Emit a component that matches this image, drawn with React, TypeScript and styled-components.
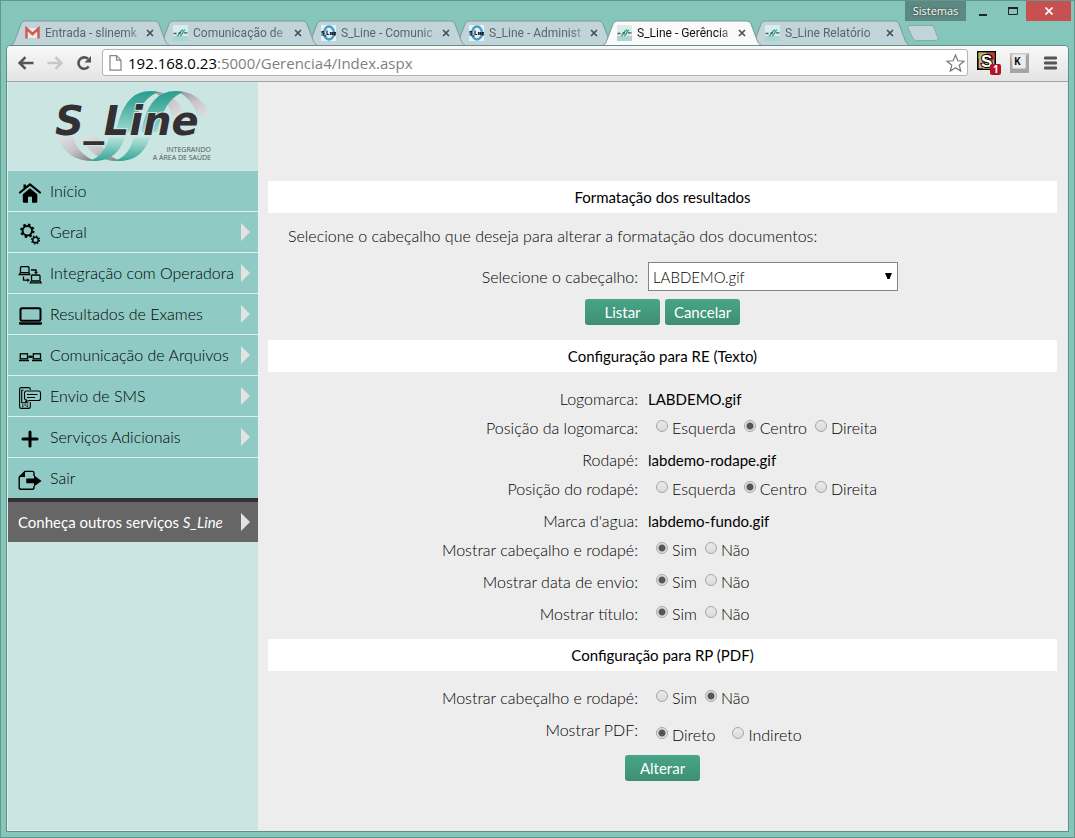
import React from "react";
import styled, { createGlobalStyle, css } from "styled-components";

const uiFont = `"Open Sans", "Noto Sans", sans-serif`;
const tabFont = `Roboto, "Open Sans", sans-serif`;
const pageFont = `Lato, "Open Sans", sans-serif`;

const GlobalStyle = createGlobalStyle`
  *, *::before, *::after { box-sizing: border-box; }
  body { margin: 0; background: #84c6ba; color: #000; font-family: ${pageFont}; font-size: 15px; }
  button, select, input { font: inherit; }
`;

const lightText = css`
  font-size: 16px;
  font-weight: 300;
`;

/* ---------- browser window ---------- */

const Window = styled.div`
  display: flex;
  flex-direction: column;
  min-height: 100vh;
  padding: 0 5px 5px;
  border: 1px solid #64968d;
  background: #84c6ba;
`;

const TitleBar = styled.header`
  position: relative;
  display: flex;
  padding: 19px 0 0 5px;
  height: 44px;
  flex: none;
  font-family: ${uiFont};
`;

const TabList = styled.div`
  display: flex;
  font-family: ${tabFont};
`;

const TabItem = styled.div<{ $active?: boolean; $order: number }>`
  position: relative;
  z-index: ${(p) => (p.$active ? 20 : 10 - p.$order)};
  display: flex;
  align-items: center;
  width: 158px;
  height: 25px;
  margin-right: -10px;
  padding: 0 11px 0 14px;
  color: ${(p) => (p.$active ? "#111" : "#59666a")};
`;

const TabShape = styled.svg`
  position: absolute;
  inset: 0;
  width: 100%;
  height: 100%;
`;

const TabButton = styled.button`
  position: relative;
  display: flex;
  align-items: center;
  gap: 5px;
  flex: 1;
  min-width: 0;
  height: 25px;
  padding: 0;
  border: 0;
  background: none;
  color: inherit;
  font-size: 12px;
  line-height: 16px;
  text-align: left;

  svg { flex: none; }
`;

const TabTitle = styled.span`
  flex: 1;
  white-space: nowrap;
  mask-image: linear-gradient(to right, #000 84%, transparent 104%);
`;

const TabClose = styled.button`
  position: relative;
  display: flex;
  width: 16px;
  height: 16px;
  padding: 4px;
  border: 0;
  background: none;
  color: inherit;
`;

const NewTab = styled.button`
  width: 32px;
  height: 16px;
  margin: 5px 0 0 8px;
  padding: 0;
  border: 0;
  background: none;
`;

const WindowControls = styled.div`
  position: absolute;
  top: 0;
  right: -2px;
  display: flex;
  height: 20px;
`;

const UserBadge = styled.button`
  width: 61px;
  padding: 0;
  border: 0;
  background: #5c8981;
  color: #fff;
  font-size: 11px;
  line-height: 20px;
  text-shadow: 0 0 2px #222;
`;

const ControlButton = styled.button<{ $close?: boolean }>`
  display: flex;
  align-items: center;
  justify-content: center;
  width: ${(p) => (p.$close ? 45 : 27)}px;
  margin-left: ${(p) => (p.$close ? 0 : 3)}px;
  padding: 0;
  border: 0;
  background: ${(p) => (p.$close ? "#c75050" : "none")};
`;

const Client = styled.div`
  display: flex;
  flex-direction: column;
  flex: 1;
  border: 1px solid #5f8f87;
  border-radius: 4px 4px 0 0;
  background: #e4efed;
`;

const Toolbar = styled.div`
  display: flex;
  align-items: center;
  height: 36px;
  padding: 0 2px 2px 4px;
  border-bottom: 1px solid #a3a3a3;
  border-radius: 4px 4px 0 0;
  background: linear-gradient(#f8f8f8, #e4e4e4);
`;

const ToolButton = styled.button<{ $wide?: boolean }>`
  display: flex;
  justify-content: center;
  align-items: center;
  width: ${(p) => (p.$wide ? 31 : 29)}px;
  height: 28px;
  padding: 0;
  border: 0;
  background: none;
`;

const AddressBar = styled.div`
  display: flex;
  align-items: center;
  flex: 1;
  height: 27px;
  margin: 0 5px 0 4px;
  padding: 0 2px 0 6px;
  border: 1px solid #b4b4b4;
  border-radius: 3px;
  background: #fff;
`;

const Address = styled.a`
  flex: 1;
  padding-left: 6px;
  color: #808080;
  font-family: ${uiFont};
  font-size: 15px;
  line-height: 20px;
  text-decoration: none;

  strong { color: #000; font-weight: 400; }
`;

/* ---------- page ---------- */

const Page = styled.div`
  display: flex;
  flex: 1;
  margin: 0 1px 1px;
  background: #ededed;
`;

const Sidebar = styled.aside`
  flex: none;
  width: 250px;
  background: #cbe6e2;
`;

const Brand = styled.a`
  display: block;
  height: 89px;
  padding: 6px 0 0 46px;
`;

const Menu = styled.ul`
  margin: 0;
  padding: 0;
  list-style: none;
`;

const MenuItem = styled.li`
  background: #90cac4;

  & + & { border-top: 1px solid #dcefed; }
`;

const MenuLink = styled.a<{ $promo?: boolean }>`
  display: flex;
  align-items: center;
  height: 40px;
  padding: 0 8px 0 10px;
  color: #000;
  ${lightText}
  line-height: 20px;
  text-decoration: none;
  ${(p) =>
    p.$promo &&
    css`
      height: 44px;
      border-top: 4px solid #333;
      background: #666;
      color: #fff;
      font-size: 15px;
      font-weight: 400;
    `}
`;

const MenuText = styled.span`
  flex: 1;
  white-space: nowrap;
`;

const MenuIcon = styled.svg`
  width: 24px;
  height: 24px;
  margin: 4px 8px 0 0;
`;

const Main = styled.main`
  flex: 1;
  padding: 99px 10px 48px;
`;

const Heading = styled.h2`
  margin: 0;
  background: #fff;
  font-size: 15px;
  font-weight: 400;
  line-height: 32px;
  text-align: center;
`;

const Intro = styled.p`
  margin: 13px 20px 16px;
  ${lightText}
  line-height: 20px;
`;

const Rows = styled.div`
  padding: 11px 0 9px;
`;

const rowGrid = css`
  display: grid;
  grid-template-columns: 19fr 21fr;
  column-gap: 10px;
`;

const Row = styled.div<{ $value?: boolean }>`
  ${rowGrid}
  min-height: ${(p) => (p.$value ? 29 : 32)}px;
  padding-top: ${(p) => (p.$value ? 3 : 0)}px;
  line-height: ${(p) => (p.$value ? 26 : 32)}px;
`;

const SelectRow = styled.div`
  ${rowGrid}
  line-height: 29px;
`;

const RowLabel = styled.label`
  ${lightText}
  text-align: right;
`;

const RowCaption = styled.span`
  ${lightText}
  text-align: right;
`;

const Options = styled.div<{ $gap?: number; $lowered?: boolean }>`
  display: flex;
  gap: ${(p) => p.$gap ?? 8}px;
  padding: ${(p) => (p.$lowered ? 10 : 0)}px 0 0 8px;
  height: 32px;
`;

const Option = styled.label`
  display: flex;
  align-items: center;
  gap: 4px;
  ${lightText}
`;

const Radio = styled.input`
  appearance: none;
  width: 12px;
  height: 12px;
  margin: 0 0 4px;
  border: 1px solid #a6a6a6;
  border-radius: 50%;
  background: linear-gradient(#eaeaea, #dadada);

  &:checked {
    background: radial-gradient(circle, #555 0 3px, #e4e4e4 4px);
  }
`;

const SelectBox = styled.div`
  position: relative;
  width: 250px;
`;

const Select = styled.select`
  display: block;
  appearance: none;
  width: 100%;
  height: 29px;
  padding: 0 24px 0 4px;
  border: 1px solid #848484;
  border-radius: 0;
  background: #fff;
  color: #000;
  font-weight: 300;
`;

const SelectArrow = styled.svg`
  position: absolute;
  top: 11px;
  right: 6px;
  width: 7px;
  height: 7px;
  pointer-events: none;
`;

const Actions = styled.div<{ $top?: boolean }>`
  display: flex;
  justify-content: center;
  gap: 5px;
  padding: ${(p) => (p.$top ? "8px 0 15px" : "0")};
`;

const ActionButton = styled.button`
  width: 75px;
  height: 26px;
  padding: 0;
  border: 0;
  border-radius: 3px;
  background: linear-gradient(#47a587, #3f8f73);
  color: #fff;
  line-height: 26px;
`;

/* ---------- drawings ---------- */

const tabOutline = "M0 25 C3 24 3 22 4 20 L10 4 C11 2 12 1 15 1 L143 1 C146 1 147 2 148 4 L154 20 C155 23 156 24 158 25";

function GmailIcon() {
  return (
    <svg width="15" height="16" viewBox="0 0 15 16">
      <rect x="1" y="3" width="13" height="10" fill="#e8eaea" />
      <path d="M1.5 13.5V3.5L7.5 9l6-5.5v10" fill="none" stroke="#cf5a50" strokeWidth="2.4" />
    </svg>
  );
}

function LeafIcon() {
  return (
    <svg width="15" height="16" viewBox="0 0 15 16">
      <rect width="15" height="16" rx="1" fill="#d9ece9" />
      <rect y="11" width="15" height="5" fill="#a9d6cf" />
      <path d="M4 11C7 10 7 5 10 5M7 11c3-1 3-6 5-6" fill="none" stroke="#2fa08d" strokeWidth="1.3" />
      <path d="M0.500 8.500h3M5.500 8h2.500M11 7.800h3.500" stroke="#555" strokeWidth="1.300" />
    </svg>
  );
}

function RingIcon() {
  return (
    <svg width="15" height="16" viewBox="0 0 15 16">
      <rect width="15" height="16" fill="#e6f3f6" />
      <ellipse cx="8" cy="8" rx="5" ry="6.5" fill="none" stroke="#4a9ccb" strokeWidth="2.4" />
      <path d="M3 6.500H1v1.500h1.500v2H.3M3.500 11h2M6 5.500v4h2M9.500 7v3M11 10V7.500h1V10M15 9.800h-1.500V7.500h1.200v1.200" fill="none" stroke="#16242c" strokeWidth="1.200" />
    </svg>
  );
}

function SLineLogo() {
  const turns = [0, 25];
  return (
    <svg width="164" height="76" viewBox="0 0 164 76" role="img" aria-label="S_Line integrando a área de saúde">
      <defs>
        <linearGradient id="up" x1="0" y1="0" x2="0" y2="1">
          <stop offset="0" stopColor="#2b9e8e" />
          <stop offset="0.300" stopColor="#43ab9c" />
          <stop offset="1" stopColor="#9fd9d0" />
        </linearGradient>
        <linearGradient id="down" x1="0" y1="0" x2="0" y2="1">
          <stop offset="0" stopColor="#b9e4df" />
          <stop offset="1" stopColor="#35a595" />
        </linearGradient>
        <linearGradient id="greyTop" x1="0" y1="0" x2="1" y2="1">
          <stop offset="0" stopColor="#8d8d92" />
          <stop offset="0.5" stopColor="#c9c5c9" />
          <stop offset="1" stopColor="#dfe3e4" />
        </linearGradient>
        <linearGradient id="greyLow" x1="0" y1="0" x2="1" y2="1">
          <stop offset="0" stopColor="#e2e2e4" />
          <stop offset="0.5" stopColor="#c5c3c6" />
          <stop offset="1" stopColor="#77777b" />
        </linearGradient>
      </defs>
      {turns.map((dx) => (
        <g key={dx} transform={`translate(${dx} 0)`}>
          <path d="M97 3C113 3 126 12 131 28H118C116 18 109 8 97 3Z" fill="url(#greyTop)" />
          <path d="M3 49H19C22 59 29 69 42 73C22 74 9 65 3 49Z" fill="url(#greyLow)" />
        </g>
      ))}
      {turns.map((dx) => (
        <g key={dx} transform={`translate(${dx} 0)`}>
          <path d="M62 44C68 16 78 3 97 3L104 4C91 10 84 20 78 44Z" fill="url(#up)" />
          <path d="M36 72.500C47 69 52 60 55 49H71C66 64 57 73 40 73Z" fill="url(#down)" />
        </g>
      ))}
      <text x="1" y="47" fontFamily="DejaVu Sans, sans-serif" fontSize="40" fontWeight="700" fontStyle="italic" fill="#332f33" stroke="#cbe6e2" strokeWidth="2" paintOrder="stroke">
        S_Line
      </text>
      <g fontFamily="Open Sans, sans-serif" fontSize="7" fill="#4c5656" textAnchor="end">
        <text x="157" y="64">INTEGRANDO</text>
        <text x="157" y="72">A ÁREA DE SAÚDE</text>
      </g>
    </svg>
  );
}

const icons: Record<string, React.ReactNode> = {
  home: (
    <>
      <path d="M5.500 3.500h2.500v4h-2.500z" />
      <path d="M2 11.500L12 3.500l10 8" fill="none" stroke="#000" strokeWidth="2.200" strokeLinecap="round" />
      <path d="M12 7.200l7.300 6V20.500a1.200 1.200 0 0 1-1.200 1.200H14v-6h-4v6H6a1.200 1.200 0 0 1-1.200-1.200V13.200z" />
    </>
  ),
  gears: (
    <g fill="none" stroke="#000">
      <circle cx="9.300" cy="8.700" r="4.700" strokeWidth="2" />
      <circle cx="9.300" cy="8.700" r="6.200" strokeWidth="2" strokeDasharray="2.400 2.470" />
      <circle cx="17.500" cy="18" r="2.800" strokeWidth="1.400" />
      <circle cx="17.500" cy="18" r="4" strokeWidth="1.300" strokeDasharray="1.500 1.640" />
    </g>
  ),
  network: (
    <g fill="none" stroke="#000" strokeWidth="1.300">
      <rect x="2.500" y="3.700" width="8.500" height="6" rx="1" />
      <path d="M2.200 9.700L1.300 11.500h10.500L11 9.700" />
      <rect x="13.500" y="12" width="8.500" height="6" rx="1" />
      <path d="M13.300 18l-1 1.800h10.700L22.200 18" />
      <path d="M13 7h5v3M5.500 13.500v3.700h4.500" />
      <path d="M16.500 9h3L18 11zM9.500 15.700v3l2-1.500z" fill="#000" strokeWidth="0.500" />
    </g>
  ),
  laptop: (
    <>
      <rect x="2.500" y="4.300" width="20" height="12.400" rx="1.500" fill="none" stroke="#000" strokeWidth="2" />
      <path d="M1 18.300h23v1.400q0 1-1.500 1h-20q-1.500 0-1.500-1z" />
    </>
  ),
  transfer: (
    <>
      <g fill="none" stroke="#000" strokeWidth="1.300">
        <rect x="2.300" y="8.800" width="7.200" height="5" />
        <rect x="15.300" y="8.800" width="7.200" height="5" />
        <path d="M1 15.500h10M14 15.500h10M10 11.800h5" />
      </g>
      <path d="M11.300 10.500h2.400v2.500h-2.400z" />
    </>
  ),
  sms: (
    <g fill="none" stroke="#000" strokeWidth="1.100">
      <path d="M12.300 4V3.300Q12.300 1.600 10.600 1.600H3.200Q1.600 1.600 1.600 3.300V20.700Q1.600 22.400 3.200 22.400H10.600Q12.300 22.400 12.300 20.700V16" />
      <path d="M5.500 4.300H3.700v12.500h6.500" />
      <path d="M8.500 5h12q2 0 2 2v5.500q0 2-2 2H11l-3.500 1.500 1-2Q6.500 13.500 6.500 12.500V7Q6.500 5 8.500 5z" />
      <path d="M9 8.500h10.500M9 11.500h8M4 19h1.500M6.300 19h1.500M8.600 19h1.500M4 20.800h1.500M8.600 20.800h1.500" />
    </g>
  ),
  plus: <path d="M12 5v14M5 12h14" stroke="#000" strokeWidth="3" strokeLinecap="round" />,
  exit: (
    <>
      <path d="M16 8V5Q16 3.400 14.500 3.400H7L1.200 9V19.500Q1.200 21.300 3 21.300H14.200Q16 21.300 16 19.500V18" fill="none" stroke="#000" strokeWidth="1.400" />
      <path d="M1 9L7 3v6z" />
      <path d="M8.300 10.500H16V7.200L23.500 13 16 18.600v-3.300H8.300z" />
    </>
  ),
};

function SubmenuArrow() {
  return (
    <svg width="10" height="18" viewBox="0 0 10 18" aria-hidden="true">
      <path d="M1 0L10 9L1 18Z" fill="#e3e3e3" />
    </svg>
  );
}

/* ---------- data ---------- */

const tabs = [
  { title: "Entrada - slinemk", icon: <GmailIcon /> },
  { title: "Comunicação de", icon: <LeafIcon /> },
  { title: "S_Line - Comunic", icon: <RingIcon /> },
  { title: "S_Line - Administ", icon: <RingIcon /> },
  { title: "S_Line - Gerência", icon: <LeafIcon />, active: true },
  { title: "S_Line Relatório", icon: <LeafIcon /> },
];

const menu = [
  { label: "Início", icon: "home" },
  { label: "Geral", icon: "gears", sub: true },
  { label: "Integração com Operadora", icon: "network", sub: true },
  { label: "Resultados de Exames", icon: "laptop", sub: true },
  { label: "Comunicação de Arquivos", icon: "transfer", sub: true },
  { label: "Envio de SMS", icon: "sms", sub: true },
  { label: "Serviços Adicionais", icon: "plus", sub: true },
  { label: "Sair", icon: "exit" },
];

/* ---------- composed parts ---------- */

function Tab({ title, icon, active, order }: { title: string; icon: React.ReactNode; active?: boolean; order: number }) {
  return (
    <TabItem $active={active} $order={order}>
      <TabShape viewBox="0 0 158 25" preserveAspectRatio="none">
        <path d={tabOutline} fill={active ? "#fafafa" : "#c1d4da"} stroke={active ? "#7f9794" : "#84999a"} />
      </TabShape>
      <TabButton type="button">
        {icon}
        <TabTitle>{title}</TabTitle>
      </TabButton>
      <TabClose type="button" aria-label={`Fechar ${title}`}>
        <svg width="8" height="8" viewBox="0 0 8 8">
          <path d="M1 1l6 6M7 1l-6 6" stroke="#4a5052" strokeWidth="1.700" />
        </svg>
      </TabClose>
    </TabItem>
  );
}

function RadioRow(props: { name: string; caption: string; options: string[]; selected: string; gap?: number; lowered?: boolean }) {
  const { name, caption, options, selected, gap, lowered } = props;
  return (
    <Row role="radiogroup" aria-labelledby={`${name}-caption`}>
      <RowCaption id={`${name}-caption`}>{caption}</RowCaption>
      <Options $gap={gap} $lowered={lowered}>
        {options.map((option) => (
          <Option key={option}>
            <Radio type="radio" name={name} value={option} defaultChecked={option === selected} />
            {option}
          </Option>
        ))}
      </Options>
    </Row>
  );
}

function ValueRow({ caption, value }: { caption: string; value: string }) {
  return (
    <Row $value>
      <RowCaption>{caption}</RowCaption>
      <span>{value}</span>
    </Row>
  );
}

const sides = ["Esquerda", "Centro", "Direita"];
const yesNo = ["Sim", "Não"];

export default function App() {
  return (
    <Window>
      <GlobalStyle />
      <TitleBar>
        <TabList>
          {tabs.map((tab, index) => (
            <Tab key={index} order={index} {...tab} />
          ))}
        </TabList>
        <NewTab type="button" aria-label="Nova guia">
          <svg width="32" height="16" viewBox="0 0 32 16">
            <path d="M3 .5H24Q26 .5 27 2.500L31 13Q31.500 15.500 29 15.500H9Q7 15.500 6 13.500L1 3Q.5 .5 3 .5Z" fill="#c1d4da" stroke="#8aa9a7" />
          </svg>
        </NewTab>
        <WindowControls>
          <UserBadge type="button">Sistemas</UserBadge>
          <ControlButton type="button" aria-label="Minimizar">
            <svg width="10" height="12" viewBox="0 0 10 12"><path d="M1 10h8" stroke="#222" strokeWidth="2" /></svg>
          </ControlButton>
          <ControlButton type="button" aria-label="Maximizar">
            <svg width="10" height="8" viewBox="0 0 10 8"><path d="M.5 1v6.500h9V1" fill="none" stroke="#222" /><path d="M0 1h10" stroke="#222" strokeWidth="2" /></svg>
          </ControlButton>
          <ControlButton type="button" $close aria-label="Fechar">
            <svg width="8" height="8" viewBox="0 0 8 8"><path d="M.5 .5l7 7M7.500 .5l-7 7" stroke="#fff" strokeWidth="1.700" /></svg>
          </ControlButton>
        </WindowControls>
      </TitleBar>
      <Client>
        <Toolbar>
          <ToolButton type="button" aria-label="Voltar">
            <svg width="16" height="14" viewBox="0 0 16 14"><path d="M1.500 7H15.500M7.500 1.200L1.700 7l5.800 5.800" fill="none" stroke="#555" strokeWidth="2.600" /></svg>
          </ToolButton>
          <ToolButton type="button" aria-label="Avançar">
            <svg width="16" height="14" viewBox="0 0 16 14"><path d="M.5 7H14.500M8.500 1.200L14.300 7l-5.800 5.800" fill="none" stroke="#c8c8c8" strokeWidth="2.600" /></svg>
          </ToolButton>
          <ToolButton type="button" aria-label="Recarregar">
            <svg width="16" height="16" viewBox="0 0 16 16"><path d="M12.700 11.500A5.700 5.700 0 1 1 12 3.800" fill="none" stroke="#555" strokeWidth="2.600" /><path d="M15 1v6.500H8.500z" fill="#555" /></svg>
          </ToolButton>
          <AddressBar>
            <svg width="13" height="16" viewBox="0 0 13 16"><path d="M1 .7h6.500l4.500 4.500v10H1zM7.500 .7v4.500h4.500" fill="#fff" stroke="#858585" strokeWidth="1.200" /></svg>
            <Address href="#"><strong>192.168.0.23</strong>:5000/Gerencia4/Index.aspx</Address>
            <svg width="19" height="18" viewBox="0 0 19 18"><path d="M9.500 1l2.300 5.800 6.200.4-4.800 4 1.600 5.900-5.300-3.300-5.300 3.300 1.600-5.900-4.800-4 6.200-.4z" fill="#fff" stroke="#777" strokeWidth="1.200" /></svg>
          </AddressBar>
          <ToolButton type="button" $wide aria-label="Extensão S">
            <svg width="24" height="24" viewBox="0 0 24 24">
              <rect x=".8" y=".8" width="17.400" height="17.400" fill="#d5a27c" stroke="#000" strokeWidth="1.600" />
              <path d="M1.500 1.500h8v6h-8z" fill="#a9bf58" />
              <path d="M9.500 1.500h8v8h-8z" fill="#c23b34" />
              <path d="M6 14h7v3.500H6z" fill="#f0d020" />
              <text x="4" y="15.500" fontFamily="Liberation Sans, sans-serif" fontSize="17" fontWeight="700" fill="#fff" stroke="#000" strokeWidth="2" paintOrder="stroke">S</text>
              <rect x="13" y="13" width="11" height="11" rx="2" fill="#b4122a" />
              <text x="16" y="22" fontFamily="Open Sans, sans-serif" fontSize="10" fontWeight="700" fill="#fff">1</text>
            </svg>
          </ToolButton>
          <ToolButton type="button" $wide aria-label="Extensão K">
            <svg width="19" height="20" viewBox="0 0 19 20">
              <rect width="19" height="20" fill="#a5a5a5" />
              <path d="M0 0h19l-3 3v11H3z" fill="#c9c9c9" />
              <rect x="2.500" y="1.500" width="13" height="14" fill="#ededed" />
              <text x="4" y="12" fontFamily="Open Sans, sans-serif" fontSize="10" fontWeight="700" fill="#111">K</text>
            </svg>
          </ToolButton>
          <ToolButton type="button" $wide aria-label="Menu do navegador">
            <svg width="13" height="14" viewBox="0 0 13 14"><path d="M1 2h11M1 7h11M1 12h11" stroke="#555" strokeWidth="2.800" strokeLinecap="round" /></svg>
          </ToolButton>
        </Toolbar>
        <Page>
          <Sidebar>
            <Brand href="#"><SLineLogo /></Brand>
            <nav>
              <Menu>
                {menu.map((item) => (
                  <MenuItem key={item.label}>
                    <MenuLink href="#">
                      <MenuIcon viewBox="0 0 24 24" aria-hidden="true">{icons[item.icon]}</MenuIcon>
                      <MenuText>{item.label}</MenuText>
                      {item.sub && <SubmenuArrow />}
                    </MenuLink>
                  </MenuItem>
                ))}
              </Menu>
              <MenuLink href="#" $promo>
                <MenuText>Conheça outros serviços <em>S_Line</em></MenuText>
                <SubmenuArrow />
              </MenuLink>
            </nav>
          </Sidebar>
          <Main>
            <form onSubmit={(event) => event.preventDefault()}>
              <Heading>Formatação dos resultados</Heading>
              <Intro>Selecione o cabeçalho que deseja para alterar a formatação dos documentos:</Intro>
              <SelectRow>
                <RowLabel htmlFor="header-file">Selecione o cabeçalho:</RowLabel>
                <SelectBox>
                  <Select id="header-file" defaultValue="LABDEMO.gif">
                    <option>LABDEMO.gif</option>
                  </Select>
                  <SelectArrow viewBox="0 0 7 7" aria-hidden="true"><path d="M0 0h7L4.500 6h-2z" /></SelectArrow>
                </SelectBox>
              </SelectRow>
              <Actions $top>
                <ActionButton type="submit">Listar</ActionButton>
                <ActionButton type="button">Cancelar</ActionButton>
              </Actions>
            </form>
            <form onSubmit={(event) => event.preventDefault()}>
              <Heading>Configuração para RE (Texto)</Heading>
              <Rows>
                <ValueRow caption="Logomarca:" value="LABDEMO.gif" />
                <RadioRow name="logo-position" caption="Posição da logomarca:" options={sides} selected="Centro" />
                <ValueRow caption="Rodapé:" value="labdemo-rodape.gif" />
                <RadioRow name="footer-position" caption="Posição do rodapé:" options={sides} selected="Centro" />
                <ValueRow caption="Marca d'agua:" value="labdemo-fundo.gif" />
                <RadioRow name="text-header" caption="Mostrar cabeçalho e rodapé:" options={yesNo} selected="Sim" />
                <RadioRow name="send-date" caption="Mostrar data de envio:" options={yesNo} selected="Sim" />
                <RadioRow name="show-title" caption="Mostrar título:" options={yesNo} selected="Sim" />
              </Rows>
              <Heading>Configuração para RP (PDF)</Heading>
              <Rows>
                <RadioRow name="pdf-header" caption="Mostrar cabeçalho e rodapé:" options={yesNo} selected="Não" />
                <RadioRow name="pdf-mode" caption="Mostrar PDF:" options={["Direto", "Indireto"]} selected="Direto" gap={17} lowered />
              </Rows>
              <Actions>
                <ActionButton type="submit">Alterar</ActionButton>
              </Actions>
            </form>
          </Main>
        </Page>
      </Client>
    </Window>
  );
}
